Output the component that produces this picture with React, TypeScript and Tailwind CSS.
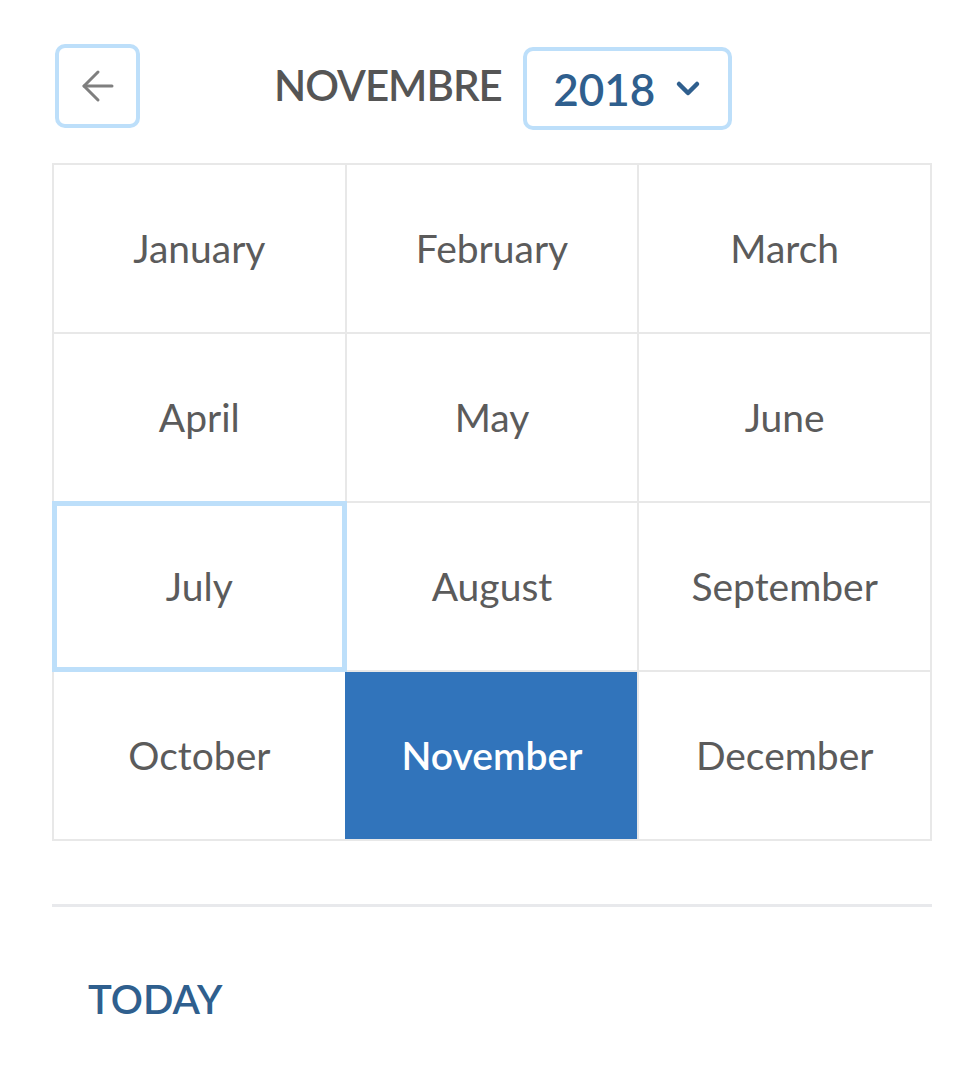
import { ArrowLeft } from 'lucide-react'

const months = [
  'January',
  'February',
  'March',
  'April',
  'May',
  'June',
  'July',
  'August',
  'September',
  'October',
  'November',
  'December',
]

const focused = 'July'
const selected = 'November'

function MonthCell({ name }: { name: string }) {
  const isSelected = name === selected
  const isFocused = name === focused

  return (
    <button
      className={
        isSelected
          ? 'relative flex h-[167px] items-center justify-center bg-[#3174bb] text-[39px] font-semibold text-white shadow-[-2px_0_0_#3174bb]'
          : 'relative flex h-[167px] items-center justify-center bg-white text-[39px] text-[#5b5b5b]'
      }
    >
      {isFocused && (
        <span className="absolute -inset-[2px] z-10 border-[5px] border-[#bddffa]" />
      )}
      <span className="relative z-20">{name}</span>
    </button>
  )
}

export default function App() {
  return (
    <div
      className="min-h-screen bg-white pl-[52px] pr-[46px] pt-[41px]"
      style={{ fontFamily: '"Source Sans Pro", Lato, "Open Sans", sans-serif' }}
    >
      <div className="flex items-center">
        <button className="ml-[3px] flex h-[84px] w-[85px] items-center justify-center rounded-[10px] border-[4px] border-[#bddffa] text-[#7f7f7f]">
          <ArrowLeft size={48} strokeWidth={1.5} />
        </button>
        <h2 className="ml-[134px] text-[42px] font-semibold tracking-[-1px] text-[#555555]">
          NOVEMBRE
        </h2>
        <button className="ml-[21px] mt-[6px] flex h-[83px] w-[209px] items-center justify-center gap-[20px] rounded-[10px] border-[4px] border-[#bddffa] text-[44px] font-semibold text-[#2f5f8e]">
          2018
          <svg width="26" height="18" viewBox="0 0 26 18" fill="none">
            <polyline
              points="4,4 13,13 22,4"
              stroke="#2f5f8e"
              strokeWidth="4.5"
              strokeLinecap="round"
              strokeLinejoin="round"
            />
          </svg>
        </button>
      </div>

      <div className="mt-[33px] grid grid-cols-3 gap-[2px] bg-[#e8e8e8] p-[2px]">
        {months.map((m) => (
          <MonthCell key={m} name={m} />
        ))}
      </div>

      <div className="mt-[63px] h-[3px] bg-[#e8e9ec]" />

      <button className="ml-[36px] mt-[62px] text-[40px] font-semibold text-[#2f5f8e]">
        TODAY
      </button>
    </div>
  )
}
